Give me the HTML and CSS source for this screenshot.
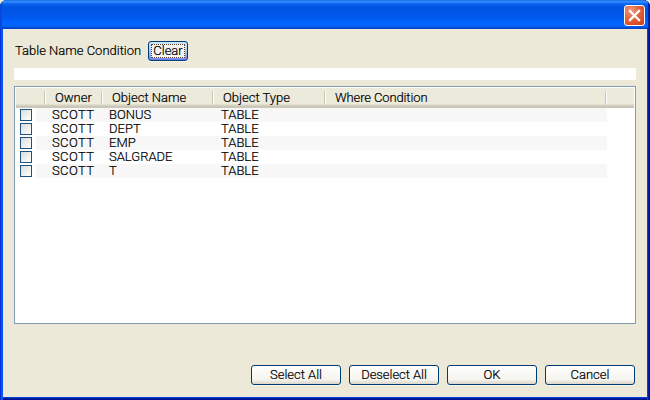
FILE: index.html
```html
<!DOCTYPE html>
<html lang="en">
<head>
<meta charset="utf-8">
<title>Table Name Condition</title>
<link rel="stylesheet" href="styles.css">
</head>
<body>
<div class="window">
  <header class="titlebar">
    <button class="close" aria-label="Close">
      <svg width="21" height="21" viewBox="0 0 21 21"><path d="M6 6 L15 15 M15 6 L6 15" stroke="#fff" stroke-width="2.3" stroke-linecap="square"/></svg>
    </button>
  </header>
  <main class="content">
    <div class="condition">
      <span class="label">Table Name Condition</span>
      <button class="btn clear"><span>Clear</span></button>
    </div>
    <div class="field"></div>
    <div class="list">
      <div class="head">
        <div></div><div>Owner</div><div>Object Name</div><div>Object Type</div><div class="where">Where Condition</div>
      </div>
      <div class="row"><i class="check"></i><div class="cells"><span class="owner">SCOTT</span><span>BONUS</span><span>TABLE</span></div></div>
      <div class="row"><i class="check"></i><div class="cells"><span class="owner">SCOTT</span><span>DEPT</span><span>TABLE</span></div></div>
      <div class="row"><i class="check"></i><div class="cells"><span class="owner">SCOTT</span><span>EMP</span><span>TABLE</span></div></div>
      <div class="row"><i class="check"></i><div class="cells"><span class="owner">SCOTT</span><span>SALGRADE</span><span>TABLE</span></div></div>
      <div class="row"><i class="check"></i><div class="cells"><span class="owner">SCOTT</span><span>T</span><span>TABLE</span></div></div>
    </div>
    <footer class="actions">
      <button class="btn">Select All</button>
      <button class="btn deselect">Deselect All</button>
      <button class="btn">OK</button>
      <button class="btn">Cancel</button>
    </footer>
  </main>
</div>
</body>
</html>
```

FILE: styles.css
```css
* { box-sizing: border-box; }
body {
  margin: 0;
  background: #ece9d8;
  font: 300 13px/14px Roboto, "Liberation Sans", sans-serif;
  color: #000;
  -webkit-text-stroke: .2px #000;
}
.window {
  width: 650px;
  height: 400px;
  overflow: hidden;
  display: flex;
  flex-direction: column;
  border-radius: 7px 7px 0 0;
  background: #ece9d8;
  box-shadow: inset 1px 0 #0831d9, inset 3px 0 #0855f0, inset -1px 0 #00138c, inset -2px 0 #001ea0, inset -3px 0 #0441d8, inset 0 -1px #00138c, inset 0 -2px #001ea0, inset 0 -3px #0441d8;
}
.titlebar {
  height: 29px;
  flex: none;
  display: flex;
  justify-content: flex-end;
  padding: 5px 5px 0 0;
  background: linear-gradient(#0058e0 0, #3a93ff 1px, #2a86fa 2px, #0b62ee 4px, #0054e3 7px, #0055e5 13px, #005cf5 19px, #0066ff 24px, #0062fa 26px, #0048d0 28px, #003cc0 29px);
  box-shadow: inset 2px 0 #0848dc, inset -2px 0 #0022a8;
}
.close {
  width: 21px;
  height: 21px;
  padding: 0;
  border: 1px solid #fff;
  border-radius: 3px;
  background: radial-gradient(circle at 30% 25%, #f09a80 0, #e4603c 45%, #d23c12 100%);
}
.close svg { display: block; margin: -1px; }
.content { padding: 11px 14px 0; }
.condition { display: flex; align-items: center; height: 22px; padding-left: 1px; }
.label { width: 133px; white-space: nowrap; padding-bottom: 1px; }
.btn {
  width: 90px;
  height: 20px;
  padding: 0 0 1px;
  border: 1px solid #003c74;
  border-radius: 3px;
  background: linear-gradient(#fff, #f5f4ee 75%, #dcd7cb);
  box-shadow: 0 1px 0 #f8f6ec;
  font: inherit;
  letter-spacing: 0;
  color: inherit;
}
.deselect { letter-spacing: -.05px; }
.clear {
  width: 40px;
  padding: 2px;
  background: linear-gradient(#cee7ff, #b0c8f0 50%, #6982ee);
}
.clear span {
  display: block;
  height: 14px;
  line-height: 12px;
  border: 1px dotted #5b4030;
  background: #f6f4ee;
}
.field { height: 12px; margin-top: 6px; background: #fff; }
.list {
  height: 238px;
  margin-top: 6px;
  padding: 1px;
  border: 1px solid #7f9db9;
  background: #fff;
}
.head {
  height: 20px;
  display: grid;
  grid-template-columns: 29px 57px 111px 112px 281px 1fr;
  padding-top: 3px;
  background: linear-gradient(#ebeadb 16px, #e2dece 16px 17px, #d6d2c2 17px 18px, #cbc7b8 18px 20px);
}
.head div {
  height: 13px;
  line-height: 14px;
  padding-left: 10px;
  border-right: 1px solid #c7c5b2;
  box-shadow: 1px 0 #fff;
}
.head .where { letter-spacing: -.12px; }
.row { display: flex; height: 14px; }
.check {
  width: 12px;
  height: 12px;
  margin: 1px 4px 0;
  border: 1px solid #1c5180;
  background: linear-gradient(135deg, #dcdcd7, #fff);
}
.cells {
  width: 571px;
  display: grid;
  grid-template-columns: 57px 112px 1fr;
  padding-left: 16px;
}
.owner { letter-spacing: .4px; }
.row:nth-child(even) .cells { background: #f7f7f7; }
.actions { display: flex; justify-content: flex-end; gap: 8px; padding: 41px 1px 0 0; }
```
